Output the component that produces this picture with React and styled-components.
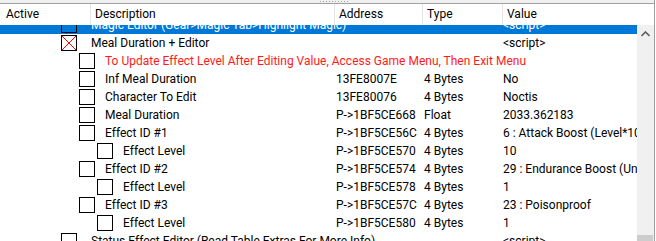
import React from 'react'
import styled, { createGlobalStyle } from 'styled-components'

const Global = createGlobalStyle`
  html, body { margin: 0; padding: 0; background: #fff; }
  body { font-family: "Segoe UI", Roboto, "Noto Sans", "Liberation Sans", sans-serif; font-size: 12px; }
`

const Frame = styled.div`
  width: 655px;
  height: 241px;
  overflow: hidden;
  box-sizing: border-box;
  border-right: 1px solid #a0a0a0;
  display: flex;
  flex-direction: column;
  background: #fff;
`

const Splitter = styled.div`
  height: 3px;
  flex: none;
  background: #f0f0f0;
  border-bottom: 1px solid #a0a0a0;
  display: flex;
  justify-content: center;
`

const Grip = styled.div`
  width: 28px;
  height: 1px;
  margin-top: 1px;
  margin-left: 14px;
  background: repeating-linear-gradient(90deg, #a0a0a0 0 1px, transparent 1px 3px);
`

const Header = styled.div`
  height: 21px;
  flex: none;
  display: grid;
  grid-template-columns: 90px 244px 88px 80px 1fr;
`

const HeadCell = styled.div`
  padding-left: ${p => (p.$first ? 6 : 4)}px;
  border-left: ${p => (p.$first ? 'none' : '1px solid #e5e5e5')};
  line-height: 21px;
  color: #000;
  white-space: nowrap;
`

const Body = styled.div`
  flex: 1;
  display: flex;
  overflow: hidden;
`

const List = styled.div`
  width: 637px;
  overflow: hidden;
`

const Rows = styled.div`
  margin-top: -9px;
`

const Row = styled.div`
  height: 18px;
  display: grid;
  grid-template-columns: 334px 88px 80px 1fr;
  align-items: center;
  background: ${p => (p.$selected ? '#0078d7' : 'transparent')};
  color: ${p => (p.$selected ? '#fff' : '#000')};
  white-space: nowrap;
`

const Tree = styled.div`
  display: flex;
  align-items: center;
  padding-left: ${p => 61 + p.$depth * 18}px;
  min-width: 0;
`

const Box = styled.span`
  width: 16px;
  height: 16px;
  box-sizing: border-box;
  border: 1px solid #000;
  flex: none;
  display: flex;
`

const Label = styled.span`
  margin-left: ${p => (p.$depth === 0 ? 14 : 10)}px;
  color: ${p => (p.$warn ? '#ff1a1a' : 'inherit')};
  line-height: 18px;
`

const Cell = styled.div`
  padding-left: ${p => p.$pad || 2}px;
  overflow: hidden;
  line-height: 18px;
`

const Scroll = styled.div`
  flex: 1;
  background: #f0f0f0;
  display: flex;
  flex-direction: column;
  justify-content: space-between;
`

const Arrow = styled.div`
  height: 17px;
  display: flex;
  align-items: center;
  justify-content: center;
`

const Thumb = styled.div`
  height: 6px;
  margin-right: 1px;
  background: #cdcdcd;
`

const rows = [
  { d: 0, text: 'Magic Editor (Gear>Magic Tab>Highlight Magic)', value: '<script>', selected: true },
  { d: 0, text: 'Meal Duration + Editor', value: '<script>', checked: true },
  { d: 1, text: 'To Update Effect Level After Editing Value, Access Game Menu, Then Exit Menu', warn: true },
  { d: 1, text: 'Inf Meal Duration', addr: '13FE8007E', type: '4 Bytes', value: 'No' },
  { d: 1, text: 'Character To Edit', addr: '13FE80076', type: '4 Bytes', value: 'Noctis' },
  { d: 1, text: 'Meal Duration', addr: 'P->1BF5CE668', type: 'Float', value: '2033.362183' },
  { d: 1, text: 'Effect ID #1', addr: 'P->1BF5CE56C', type: '4 Bytes', value: '6 : Attack Boost (Level*10' },
  { d: 2, text: 'Effect Level', addr: 'P->1BF5CE570', type: '4 Bytes', value: '10' },
  { d: 1, text: 'Effect ID #2', addr: 'P->1BF5CE574', type: '4 Bytes', value: '29 : Endurance Boost (Un' },
  { d: 2, text: 'Effect Level', addr: 'P->1BF5CE578', type: '4 Bytes', value: '1' },
  { d: 1, text: 'Effect ID #3', addr: 'P->1BF5CE57C', type: '4 Bytes', value: '23 : Poisonproof' },
  { d: 2, text: 'Effect Level', addr: 'P->1BF5CE580', type: '4 Bytes', value: '1' },
  { d: 0, text: 'Status Effect Editor (Read Table Extras For More Info)', value: '<script>' },
]

const Cross = () => (
  <svg width="14" height="14" viewBox="0 0 14 14">
    <path d="M0 0L14 14M14 0L0 14" stroke="#ff0000" strokeWidth="1" />
  </svg>
)

export default function App() {
  return (
    <Frame>
      <Global />
      <Splitter><Grip /></Splitter>
      <Header>
        <HeadCell $first>Active</HeadCell>
        <HeadCell>Description</HeadCell>
        <HeadCell>Address</HeadCell>
        <HeadCell>Type</HeadCell>
        <HeadCell>Value</HeadCell>
      </Header>
      <Body>
        <List>
          <Rows>
            {rows.map((r, i) => (
              <Row key={i} $selected={r.selected}>
                <Tree $depth={r.d}>
                  <Box>{r.checked && <Cross />}</Box>
                  <Label $depth={r.d} $warn={r.warn}>{r.text}</Label>
                </Tree>
                <Cell>{r.addr}</Cell>
                <Cell>{r.type}</Cell>
                <Cell $pad={1}>{r.value}</Cell>
              </Row>
            ))}
          </Rows>
        </List>
        <Scroll>
          <Arrow>
            <svg width="9" height="6" viewBox="0 0 9 6">
              <path d="M0.5 5L4.5 1L8.5 5" fill="none" stroke="#606060" strokeWidth="1.6" />
            </svg>
          </Arrow>
          <Thumb />
        </Scroll>
      </Body>
    </Frame>
  )
}
